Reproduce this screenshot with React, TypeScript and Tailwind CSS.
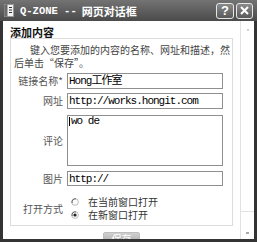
import React from "react";

const cjk = { fontFamily: '"Noto Sans CJK SC", "Liberation Sans", sans-serif' };
const mono = { fontFamily: '"Liberation Mono", "Noto Sans CJK SC", monospace' };

function Field({ value, h = 16 }: { value: string; h?: number }) {
  return (
    <div
      className="w-[156px] border border-[#8f8f8f] bg-white pl-[1px] text-[11px] leading-[14px] text-black tracking-[-1px] overflow-hidden whitespace-nowrap"
      style={{ ...mono, height: h }}
    >
      {value}
    </div>
  );
}

function Label({ text }: { text: string }) {
  return (
    <div className="text-right text-[10px] leading-[16px] text-[#555] whitespace-nowrap" style={cjk}>
      {text}
    </div>
  );
}

function Radio({ checked }: { checked?: boolean }) {
  return (
    <svg width="8" height="8" viewBox="0 0 8 8" className="ml-[4px] shrink-0">
      <circle cx="4" cy="4" r="3.4" fill="#fafafa" stroke="#b0b0b0" strokeWidth="0.8" />
      <path d="M1.2 5 A3.2 3.2 0 0 1 5 0.9" fill="none" stroke="#555" strokeWidth="0.9" />
      {checked && <circle cx="4" cy="4" r="1.6" fill="#222" />}
    </svg>
  );
}

export default function App() {
  return (
    <div className="w-[257px] h-[242px] bg-[#343434] flex flex-col overflow-hidden">
      {/* Title bar */}
      <div className="h-[21px] shrink-0 flex items-center bg-gradient-to-b from-[#737373] to-[#4b4b4b] pl-[3px] pr-[4px]">
        <svg width="12" height="13" viewBox="0 0 12 13" className="shrink-0">
          <rect x="1.5" y="0.5" width="9" height="12" fill="#f2f2f2" stroke="#9a9a9a" />
          <rect x="1.5" y="0.5" width="3" height="12" fill="#6a6a6a" />
          <path d="M6 3.5h3M6 6h3M6 8.5h3" stroke="#333" strokeWidth="1" />
        </svg>
        <div className="ml-[5px] flex items-center text-white font-bold text-[11px] leading-[14px] whitespace-nowrap">
          <span style={mono} className="text-[10.5px]">Q-ZONE --</span>
          <span style={cjk} className="ml-[5px]">网页对话框</span>
        </div>
        <div className="ml-auto flex items-center gap-[2px]">
          <div className="w-[18px] h-[16px] rounded-[3px] border border-[#e6e6e6] bg-gradient-to-b from-[#8a8a8a] to-[#5a5a5a] flex items-center justify-center text-white font-bold text-[13px] leading-none" style={{ fontFamily: '"Liberation Sans", sans-serif' }}>
            ?
          </div>
          <div className="w-[17px] h-[16px] rounded-[3px] border border-[#e6e6e6] bg-gradient-to-b from-[#8a8a8a] to-[#5a5a5a] flex items-center justify-center">
            <svg width="9" height="9" viewBox="0 0 9 9">
              <path d="M1 1L8 8M8 1L1 8" stroke="white" strokeWidth="2" />
            </svg>
          </div>
        </div>
      </div>

      {/* Body */}
      <div className="flex-1 min-h-0 flex ml-[3px] mr-[3px] mb-[3px] bg-white overflow-hidden">
        <div className="w-[237px] shrink-0 flex flex-col pl-[7px] pt-[5px]">
          <div className="text-[11px] leading-[12px] font-bold text-[#111]" style={cjk}>
            添加内容
          </div>
          <div className="w-[223px] border border-[#dcdcdc] pt-[4px] pb-[4px] pl-[3px] flex flex-col">
            <div className="text-[10px] leading-[13px] text-[#444] whitespace-nowrap" style={cjk}>
              <span className="pl-[16px]">键入您要添加的内容的名称、网址和描述，然</span>
              <br />
              后单击“保存”。
            </div>

            <div className="grid grid-cols-[49px_156px] gap-x-[4px] mt-[4px]">
              <Label text="链接名称*" />
              <Field value="Hong工作室" />

              <div className="mt-[4px]"><Label text="网址" /></div>
              <div className="mt-[4px]"><Field value="http://works.hongit.com" /></div>

              <div className="mt-[6px] flex items-center justify-end h-[51px]">
                <Label text="评论" />
              </div>
              <div className="mt-[6px] relative">
                <div
                  className="w-[156px] h-[51px] border border-[#8f8f8f] bg-white pl-[3px] text-[11px] leading-[11px] text-black tracking-[-1px]"
                  style={mono}
                >
                  wo de
                </div>
                <div className="absolute left-[2px] top-[2px] w-[1px] h-[9px] bg-black" />
              </div>

              <div className="mt-[5px]"><Label text="图片" /></div>
              <div className="mt-[5px]"><Field value="http://" h={15} /></div>

              <div className="mt-[8px] flex items-center justify-end">
                <div className="text-[10px] leading-[13px] text-[#555]" style={cjk}>打开方式</div>
              </div>
              <div className="mt-[8px] flex flex-col">
                <div className="h-[13px] flex items-center">
                  <Radio />
                  <span className="ml-[9px] text-[10px] leading-[13px] text-[#333]" style={cjk}>在当前窗口打开</span>
                </div>
                <div className="h-[13px] flex items-center">
                  <Radio checked />
                  <span className="ml-[9px] text-[10px] leading-[13px] text-[#333]" style={cjk}>在新窗口打开</span>
                </div>
              </div>
            </div>
          </div>

          <div className="ml-[93px] mt-[6px] w-[37px] h-[14px] shrink-0 rounded-[2px] bg-gradient-to-b from-[#d0d0d0] to-[#a6a6a6] border border-[#bdbdbd] flex justify-center text-white text-[10px] leading-[12px]" style={cjk}>
            保存
          </div>
        </div>

        {/* Scrollbar */}
        <div className="flex-1 border-l border-[#e2e2e2] flex flex-col">
          <div className="h-[190px] flex justify-center pt-[8px]">
            <div className="w-[2px] h-[2px] bg-[#cfcfcf]" />
          </div>
          <div className="flex-1 border-t border-[#e2e2e2] flex items-end justify-center pb-[5px]">
            <div className="w-[3px] h-[2px] bg-[#a8a8a8]" />
          </div>
        </div>
      </div>
    </div>
  );
}
